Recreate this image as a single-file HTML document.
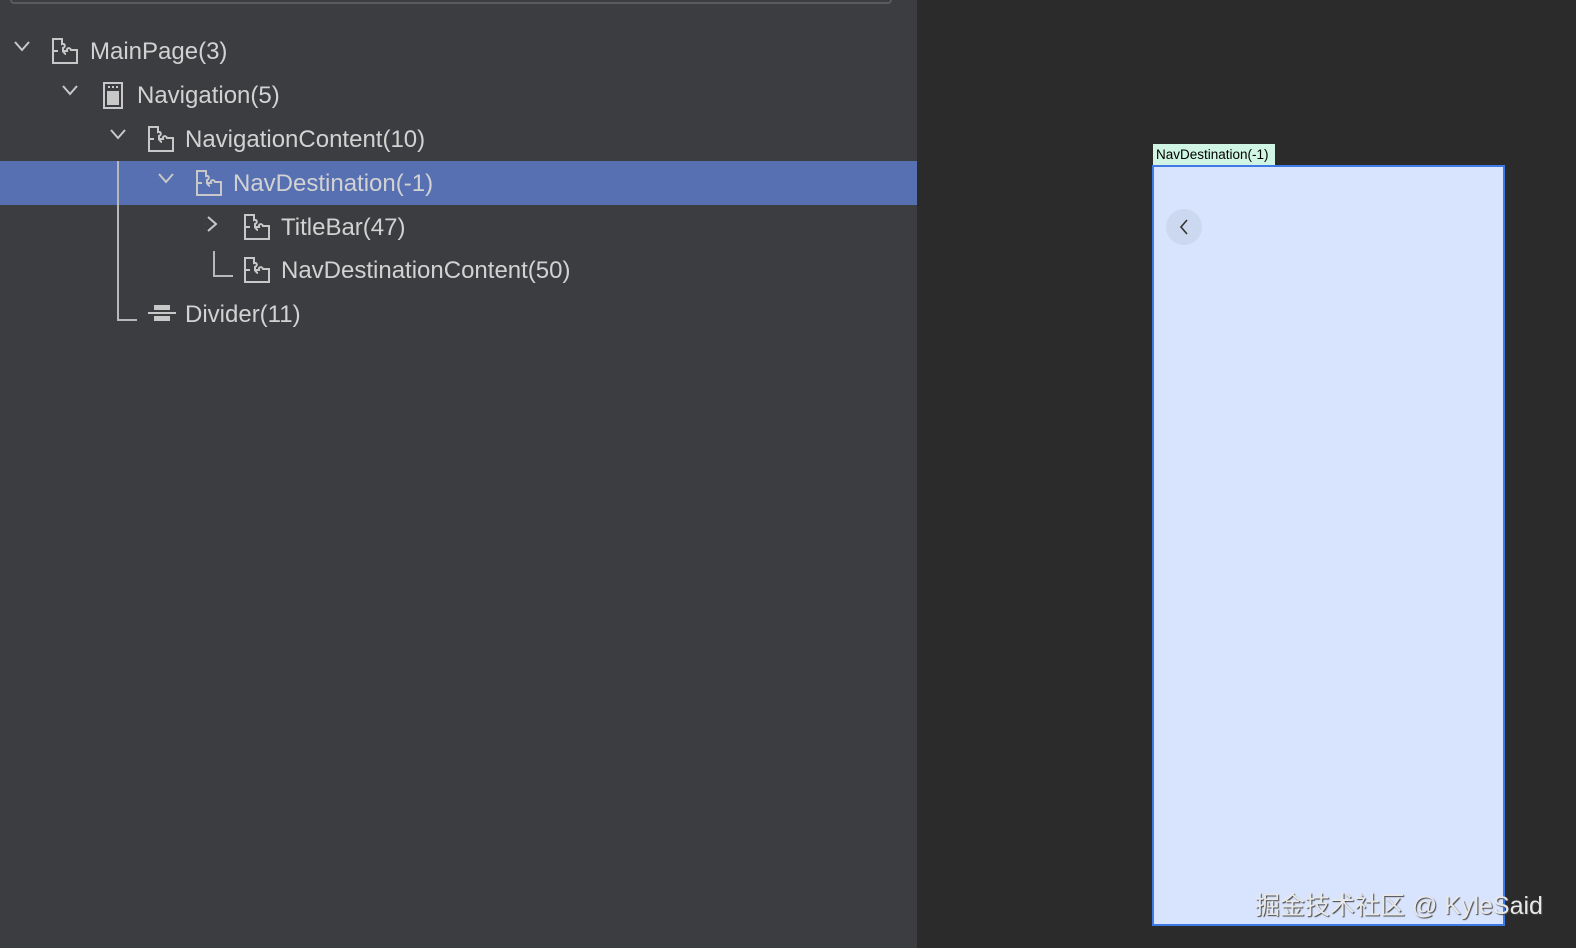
<!DOCTYPE html>
<html><head><meta charset="utf-8"><style>
body{margin:0;width:1576px;height:948px;overflow:hidden;background:#2b2b2b;font-family:"Liberation Sans",Arial,sans-serif;position:relative}
.left{position:absolute;left:0;top:0;width:917px;height:948px;background:#3c3d40}
.top{position:absolute;left:10px;top:-4px;width:878px;height:6px;border:2px solid #5a5b5e;border-top:none;border-radius:0 0 4px 4px}
.row{position:absolute;left:0;width:917px;height:44px}
.sel{background:#5670b2}
.t{position:absolute;top:9px;font-size:24px;color:#d2d2d2;white-space:nowrap}
.chev{position:absolute;top:12px}
.ic{position:absolute;top:9px}
.ln{position:absolute;background:#b8b8b8}
</style></head><body>
<div class="left">
<div class="top"></div>
<div class="row sel" style="top:161px"></div>
<div class="ln" style="left:117px;top:161px;width:2px;height:160px"></div>
<div class="ln" style="left:117px;top:319px;width:20px;height:2px"></div>
<div class="ln" style="left:213px;top:251px;width:2px;height:26px"></div>
<div class="ln" style="left:213px;top:275px;width:20px;height:2px"></div>
<svg width="0" height="0" style="position:absolute"><defs>
<g id="pz" fill="none" stroke="#c8c8c8" stroke-width="2"><path d="M1 25V1h9v5c3-1 4 3 1 4v3h4c-1-3 3-4 4-1h6v13z M1 13h5M10 13c2 0 2 3 4 3"/></g>
<g id="cv" fill="none" stroke="#c8c8c8" stroke-width="2"><path d="M1 1l7 8 7-8"/></g>
</defs></svg>
<div class="row" style="top:29px"><svg class="chev" style="left:14px" width="16" height="12"><use href="#cv"/></svg><svg class="ic" style="left:52px" width="27" height="27"><use href="#pz"/></svg><span class="t" style="left:90px">MainPage(3)</span></div>
<div class="row" style="top:73px"><svg class="chev" style="left:62px" width="16" height="12"><use href="#cv"/></svg><svg class="ic" style="left:103px" width="22" height="28"><rect x="1" y="1" width="18" height="25" fill="none" stroke="#c8c8c8" stroke-width="2"/><rect x="4" y="9" width="12" height="14" fill="#c8c8c8"/><path d="M5 5h2M9 5h2M13 5h2" stroke="#c8c8c8" stroke-width="2"/></svg><span class="t" style="left:137px">Navigation(5)</span></div>
<div class="row" style="top:117px"><svg class="chev" style="left:110px" width="16" height="12"><use href="#cv"/></svg><svg class="ic" style="left:148px" width="27" height="27"><use href="#pz"/></svg><span class="t" style="left:185px">NavigationContent(10)</span></div>
<div class="row" style="top:161px"><svg class="chev" style="left:158px" width="16" height="12"><use href="#cv"/></svg><svg class="ic" style="left:196px" width="27" height="27"><use href="#pz"/></svg><span class="t" style="left:233px">NavDestination(-1)</span></div>
<div class="row" style="top:205px"><svg class="chev" style="left:207px;top:11px" width="12" height="16"><path d="M1 1l8 7-8 7" fill="none" stroke="#c8c8c8" stroke-width="2"/></svg><svg class="ic" style="left:244px" width="27" height="27"><use href="#pz"/></svg><span class="t" style="left:281px">TitleBar(47)</span></div>
<div class="row" style="top:248px"><svg class="ic" style="left:244px" width="27" height="27"><use href="#pz"/></svg><span class="t" style="left:281px">NavDestinationContent(50)</span></div>
<div class="row" style="top:292px"><svg class="ic" style="left:148px;top:13px" width="28" height="20"><rect x="6" y="0" width="16" height="5" fill="#c8c8c8"/><rect x="0" y="7" width="28" height="2" fill="#c8c8c8"/><rect x="6" y="11" width="16" height="5" fill="#c8c8c8"/></svg><span class="t" style="left:185px">Divider(11)</span></div>
</div>
<div style="position:absolute;left:1153px;top:144px;width:122px;height:21px;background:#d0f5e4;font-size:13.5px;line-height:22px;text-indent:3px;color:#000">NavDestination(-1)</div>
<div style="position:absolute;left:1152px;top:165px;width:349px;height:757px;background:#d8e4fd;border:2px solid #3d7ae6"></div>
<div style="position:absolute;left:1166px;top:209px;width:36px;height:36px;border-radius:50%;background:#ccd8ef"></div>
<svg style="position:absolute;left:1178px;top:218px" width="12" height="18"><path d="M9 2L3 9l6 7" fill="none" stroke="#333" stroke-width="1.6"/></svg>
<div style="position:absolute;left:1255px;top:886px;font-size:25px;color:#e8e8e8;text-shadow:1px 1px 1px #444;font-family:'Liberation Sans','Noto Sans CJK SC',sans-serif;white-space:nowrap">掘金技术社区 @ KyleSaid</div>
</body></html>
